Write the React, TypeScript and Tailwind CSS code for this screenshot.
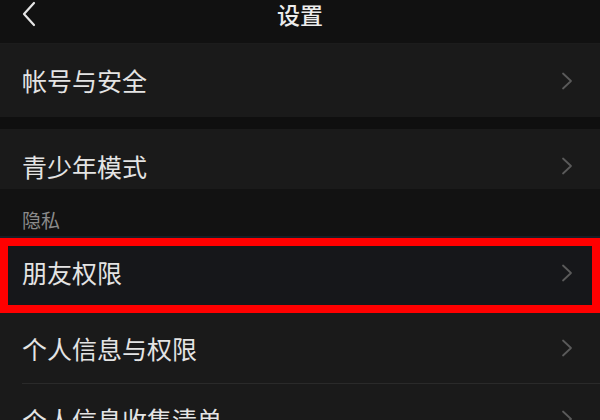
const FONT = { fontFamily: '"Noto Sans CJK SC", "Noto Sans", sans-serif' };

function Chevron() {
  return (
    <svg width="12" height="18" viewBox="0 0 12 18" className="mr-[27px] shrink-0">
      <polyline points="2,1.5 10,9 2,16.5" fill="none" stroke="#5a5a5a" strokeWidth="1.8" strokeLinecap="round" strokeLinejoin="round" />
    </svg>
  );
}

function Row({ label, className }: { label: string; className: string }) {
  return (
    <div className={`flex items-center justify-between ${className}`}>
      <span className="pl-[22px] text-[25px] leading-none text-[#e4e4e4]">{label}</span>
      <Chevron />
    </div>
  );
}

export default function App() {
  return (
    <div className="h-[420px] w-[600px] overflow-hidden bg-[#121212]" style={FONT}>
      {/* header */}
      <div className="grid h-[44px] grid-cols-[1fr_auto_1fr] items-start border-b border-[#1c1c1c] bg-[#111111]">
        <svg width="16" height="26" viewBox="0 0 16 26" className="ml-[21px] mt-[1px]">
          <polyline points="13,2 3,13 13,24" fill="none" stroke="#e6e6e6" strokeWidth="2.2" strokeLinecap="round" strokeLinejoin="round" />
        </svg>
        <span className="mt-[3px] text-[23px] font-medium leading-none text-[#ececec]">设置</span>
        <div />
      </div>

      <Row label="帐号与安全" className="h-[73px] bg-[#1a1a1a]" />
      <div className="h-[12px] bg-[#0f0f0f]" />
      <Row label="青少年模式" className="h-[60px] bg-[#1a1a1a] pt-[14px]" />

      {/* section title */}
      <div className="flex h-[49px] items-center border-b-2 border-[#171d26] bg-[#121212] pt-[13px]">
        <span className="pl-[22px] text-[19px] leading-none text-[#8a8a8a]">隐私</span>
      </div>

      {/* highlighted row */}
      <Row label="朋友权限" className="h-[75px] border-[8px] border-[#ff0000] bg-[#16171a] pb-[6px] [&>span]:pl-[14px] [&>svg]:mr-[19px]" />

      <Row label="个人信息与权限" className="h-[70px] bg-[#1a1a1a]" />
      <div className="bg-[#1a1a1a] pl-[22px]">
        <div className="h-px bg-[#2a2a2a]" />
      </div>
      <Row label="个人信息收集清单" className="h-[70px] bg-[#1a1a1a]" />
    </div>
  );
}
